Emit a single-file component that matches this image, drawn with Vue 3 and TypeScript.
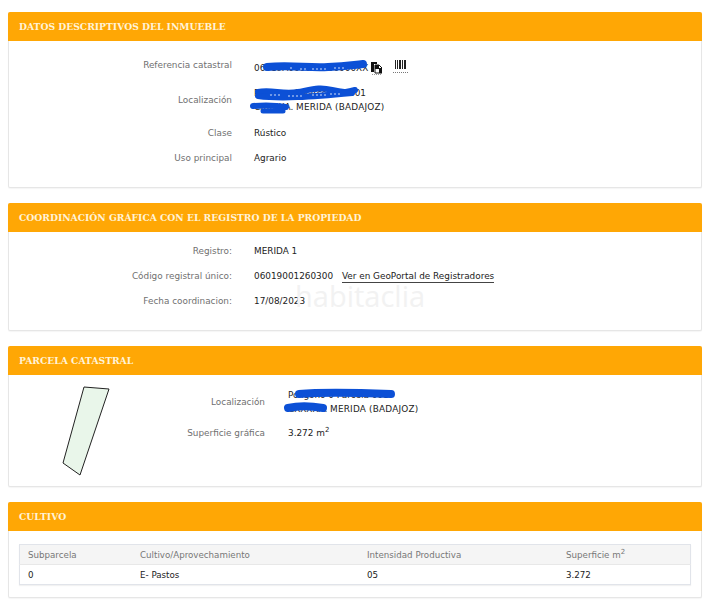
<script setup lang="ts">
interface Row {
  label: string
  lines: string[]
}

const inmueble: Row[] = [
  { label: 'Clase', lines: ['Rústico'] },
  { label: 'Uso principal', lines: ['Agrario'] },
]

const registro: Row[] = [
  { label: 'Registro:', lines: ['MERIDA 1'] },
  { label: 'Código registral único:', lines: ['06019001260300'] },
  { label: 'Fecha coordinacion:', lines: ['17/08/2023'] },
]

const columnas = ['Subparcela', 'Cultivo/Aprovechamiento', 'Intensidad Productiva']
const cultivo = ['0', 'E- Pastos', '05', '3.272']

// barras del icono de código de barras: [x, ancho]
const barras: [number, number][] = [[0, 1], [2, 1], [4, 2], [7, 1], [9, 2]]
</script>

<template>
  <div class="page">
    <section class="card">
      <h2 class="head">DATOS DESCRIPTIVOS DEL INMUEBLE</h2>
      <div class="body body-first">
        <div class="row row-ref">
          <span class="label">Referencia catastral</span>
          <span class="value ref-value">
            <span class="ref-text">06019A000000000000XX</span>
            <svg class="copy" width="11" height="13" viewBox="0 0 11 13">
              <path d="M0 0h6v2H3v8H0z" fill="#111" />
              <path d="M4 3h4l3 3v5H4z" fill="#fff" stroke="#111" stroke-width="1" />
              <path d="M4 3h4v3h3v5H8V7H4z" fill="#111" />
              <path d="M1 12.5h9" stroke="#999" stroke-dasharray="1 1" />
            </svg>
            <span class="barcode">
              <svg width="11" height="9" viewBox="0 0 11 9">
                <rect v-for="b in barras" :key="b[0]" :x="b[0]" y="0" :width="b[1]" height="9" fill="#222" />
              </svg>
            </span>
          </span>
        </div>
        <div class="row row-loc">
          <span class="label">Localización</span>
          <span class="value two-lines">
            <span>Polígono 0 Parcela 00001</span>
            <span>CXXXXA. <span class="city">MERIDA (BADAJOZ)</span></span>
          </span>
        </div>
        <div v-for="r in inmueble" :key="r.label" class="row">
          <span class="label">{{ r.label }}</span>
          <span class="value">{{ r.lines[0] }}</span>
        </div>
        <svg class="scribble scribble-a" width="120" height="64" viewBox="0 0 120 64">
          <path d="M17 10C40 8 58 11 78 10S102 8 113 7" fill="none" stroke="#0c50d6" stroke-width="8" stroke-linecap="round" />
          <path d="M40 11h4M50 12h8M62 12h16M84 11h10" stroke="#cfdcf8" stroke-width="1" stroke-dasharray="2 2" />
          <path d="M8 35C22 32 32 38 48 35S70 30 82 33 98 35 105 33" fill="none" stroke="#0c50d6" stroke-width="6" stroke-linecap="round" />
          <path d="M8 39C30 42 60 40 102 36" fill="none" stroke="#0c50d6" stroke-width="6" stroke-linecap="round" />
          <path d="M20 38h10M38 39h16M62 38h14M80 37h12" stroke="#cfdcf8" stroke-width="1" stroke-dasharray="2 2" />
          <path d="M3 49C14 48 24 48 36 50" fill="none" stroke="#0c50d6" stroke-width="6" stroke-linecap="round" />
          <path d="M13 54h20" fill="none" stroke="#0c50d6" stroke-width="5" stroke-linecap="round" />
        </svg>
      </div>
    </section>

    <section class="card">
      <h2 class="head">COORDINACIÓN GRÁFICA CON EL REGISTRO DE LA PROPIEDAD</h2>
      <div class="body body-reg">
        <div v-for="r in registro" :key="r.label" class="row">
          <span class="label">{{ r.label }}</span>
          <span class="value">
            {{ r.lines[0] }}
            <a v-if="r.label.startsWith('Código')" class="geo">Ver en GeoPortal de Registradores</a>
          </span>
        </div>
        <span class="watermark">habitaclia</span>
      </div>
    </section>

    <section class="card">
      <h2 class="head">PARCELA CATASTRAL</h2>
      <div class="body body-parcela">
        <svg class="plot" width="50" height="92" viewBox="0 0 50 92">
          <path d="M22 2L47 4 18 90 1 78z" fill="#e9f6ea" stroke="#222" stroke-width="1" stroke-linejoin="round" />
        </svg>
        <div class="parcela-rows">
          <div class="row row-parcela-loc">
            <span class="label">Localización</span>
            <span class="value two-lines">
              <span>Polígono 0 Parcela 001</span>
              <span>CXXXXA. <span class="city">MERIDA (BADAJOZ)</span></span>
            </span>
          </div>
          <div class="row">
            <span class="label">Superficie gráfica</span>
            <span class="value">3.272 m<sup>2</sup></span>
          </div>
        </div>
        <svg class="scribble scribble-b" width="116" height="28" viewBox="0 0 116 28">
          <path d="M16 8C40 6 80 7 108 8" fill="none" stroke="#0c50d6" stroke-width="8" stroke-linecap="round" />
          <path d="M5 22C14 20 28 20 40 22" fill="none" stroke="#0c50d6" stroke-width="8" stroke-linecap="round" />
        </svg>
      </div>
    </section>

    <section class="card">
      <h2 class="head">CULTIVO</h2>
      <div class="body body-cultivo">
        <table class="tabla">
          <thead>
            <tr>
              <th v-for="c in columnas" :key="c">{{ c }}</th>
              <th>Superficie m<sup>2</sup></th>
            </tr>
          </thead>
          <tbody>
            <tr>
              <td v-for="c in cultivo" :key="c">{{ c }}</td>
            </tr>
          </tbody>
        </table>
      </div>
    </section>
  </div>
</template>

<style>
body {
  background: #fff;
}
</style>

<style scoped>
.page {
  width: 719px;
  height: 600px;
  overflow: hidden;
  box-sizing: border-box;
  padding: 12px 17px 0 8px;
  font-family: "DejaVu Sans", Verdana, sans-serif;
  font-size: 8.9px;
  color: #222;
  display: flex;
  flex-direction: column;
  gap: 15px;
}

.card {
  border: 1px solid #e6e6e6;
  border-top: 0;
  border-radius: 2px;
  box-shadow: 0 1px 1px rgba(0, 0, 0, 0.04);
  background: #fff;
}

.head {
  margin: 0 -1px;
  height: 29px;
  line-height: 29px;
  padding-left: 11px;
  background: #ffa705;
  color: #fff3d8;
  font-size: 9.2px;
  font-weight: bold;
  font-family: "DejaVu Serif", "DejaVu Sans", serif;
  border-radius: 2px 2px 0 0;
}

.body {
  position: relative;
}

.body-first {
  height: 146px;
  box-sizing: border-box;
  padding-top: 12px;
}

.body-reg {
  height: 98px;
  box-sizing: border-box;
  padding-top: 6px;
}

.body-parcela {
  height: 111px;
  box-sizing: border-box;
  padding: 10px 0 0 53px;
  display: flex;
}

.body-cultivo {
  height: 66px;
  box-sizing: border-box;
  padding: 13px 10px 0;
}

.row {
  display: grid;
  grid-template-columns: 223px 1fr;
  column-gap: 22px;
  height: 25px;
  align-items: center;
}

.row-ref {
  height: 27px;
}

.row-ref .label {
  margin-top: -4px;
}

.row-loc {
  height: 40px;
}

.label {
  text-align: right;
  color: #707070;
}

.two-lines {
  display: flex;
  flex-direction: column;
  line-height: 14px;
}

.city {
  letter-spacing: 0.2px;
}

.ref-value {
  display: flex;
  align-items: center;
  padding-top: 2px;
}

.ref-text {
  width: 117px;
}

.copy {
  margin-top: 1px;
}

.barcode {
  margin: -3px 0 0 11px;
  padding: 0 2px 3px;
  border-bottom: 1px dotted #777;
  line-height: 0;
}

.geo {
  margin-left: 6px;
  color: #222;
  border-bottom: 1px solid #444;
  padding-bottom: 1px;
}

.watermark {
  position: absolute;
  left: 286px;
  top: 44px;
  font-family: "Open Sans", sans-serif;
  font-size: 29px;
  color: #f2f2f2;
}

.plot {
  flex: none;
}

.parcela-rows .row {
  grid-template-columns: 153px 1fr;
  column-gap: 23px;
}

.parcela-rows .row-parcela-loc {
  height: 34px;
  margin-bottom: 1px;
}

.scribble {
  position: absolute;
  pointer-events: none;
}

.scribble-a {
  left: 241px;
  top: 16px;
}

.scribble-b {
  left: 274px;
  top: 11px;
}

sup {
  font-size: 7px;
  line-height: 0;
}

.tabla {
  width: 672px;
  border-collapse: collapse;
  table-layout: fixed;
  border: 1px solid #e1e4ea;
  box-shadow: 0 1px 1px rgba(0, 0, 0, 0.05);
}

.tabla th,
.tabla td {
  height: 19px;
  padding: 0 0 0 8px;
  text-align: left;
  font-weight: normal;
  font-size: 8.7px;
}

.tabla th {
  background: #f5f5f5;
  color: #777;
  border-bottom: 1px solid #e8e8e8;
}

.tabla th:nth-child(1) {
  width: 104px;
}

.tabla th:nth-child(2) {
  width: 219px;
}

.tabla th:nth-child(3) {
  width: 191px;
}
</style>
